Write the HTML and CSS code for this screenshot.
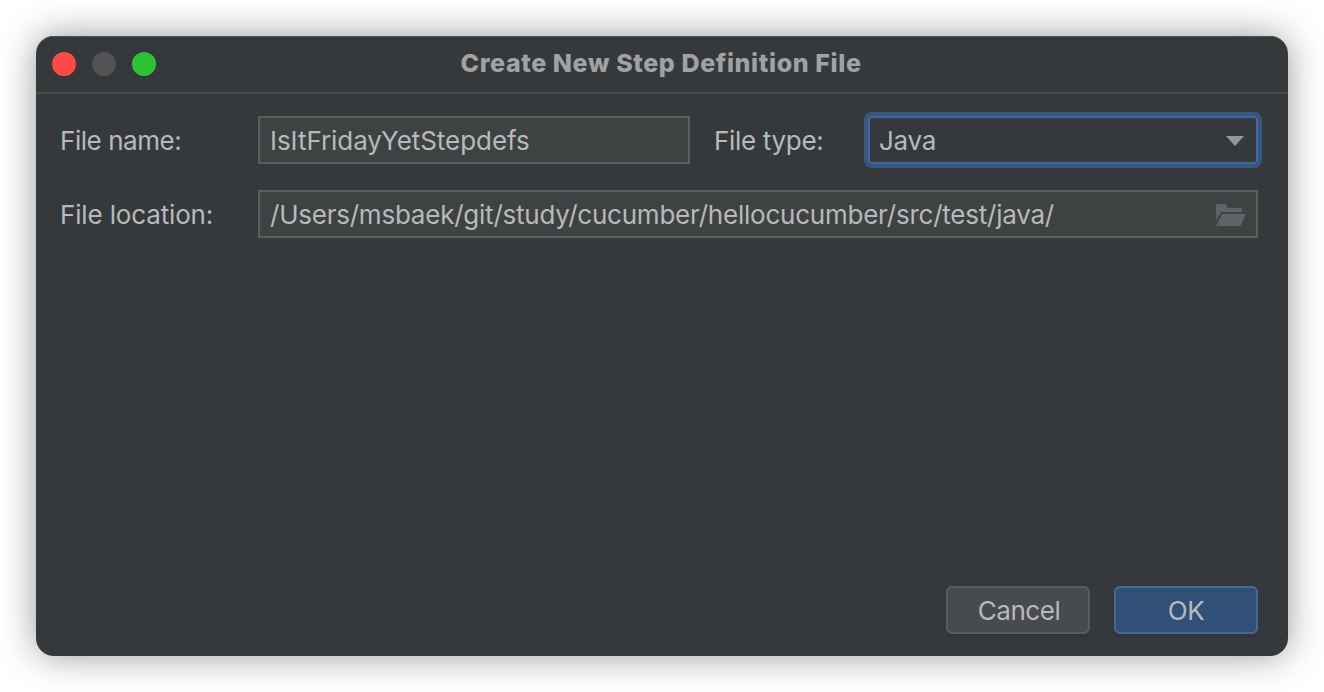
FILE: index.html
```html
<!DOCTYPE html>
<html lang="en">
<head>
<meta charset="utf-8">
<title>Create New Step Definition File</title>
<link rel="stylesheet" href="styles.css">
</head>
<body>
<main class="dialog">
  <header class="titlebar">
    <div class="lights"><span class="light close"></span><span class="light minimize"></span><span class="light maximize"></span></div>
    <h1 class="title">Create New Step Definition File</h1>
  </header>
  <section class="form">
    <div class="row">
      <span class="label tight">File name:</span>
      <div class="field name">IsItFridayYetStepdefs</div>
      <span class="label type">File type:</span>
      <div class="select">Java
        <svg class="arrow" width="18" height="10" viewBox="0 0 18 10"><path d="M0 0H18L9 10Z" fill="#94989b"/></svg>
      </div>
    </div>
    <div class="row">
      <span class="label location-label">File location:</span>
      <div class="field location">/Users/msbaek/git/study/cucumber/hellocucumber/src/test/java/
        <svg class="folder" width="30" height="22" viewBox="0 0 30 22"><path d="M0 0H10L12 4H26V8H5L0 17ZM6 10H30L24.500 22H0Z" fill="#5b6467"/></svg>
      </div>
    </div>
  </section>
  <footer class="actions">
    <button class="button tight">Cancel</button>
    <button class="button primary tight">OK</button>
  </footer>
</main>
</body>
</html>
```
FILE: styles.css
```css
* { box-sizing: border-box; }
body {
  margin: 0;
  padding: 36px;
  height: 692px;
  overflow: hidden;
  background: #fff;
  font: 26px/30px Inter, "Liberation Sans", sans-serif;
  letter-spacing: -.23px;
  color: #b8b9ba;
}
.dialog {
  display: flex;
  flex-direction: column;
  width: 1252px;
  height: 620px;
  border-radius: 18px;
  background: #35393b;
  box-shadow: inset 0 2px 0 -1px #505553, 0 0 36px rgba(0, 0, 0, .4);
}
.titlebar {
  display: grid;
  grid-template-columns: 160px 1fr 162px;
  align-items: center;
  height: 58px;
  border-bottom: 2px solid #4b4a4a;
}
.lights { display: flex; gap: 16px; padding-left: 16px; }
.light { width: 24px; height: 24px; border-radius: 50%; }
.close { background: #ff4947; }
.minimize { background: #535355; }
.maximize { background: #2bc332; }
.title {
  margin: 0;
  padding-bottom: 2px;
  text-align: center;
  font-size: 25px;
  line-height: 30px;
  font-weight: 800;
  letter-spacing: .61px;
  color: #a1a2a3;
  white-space: nowrap;
}
.form { display: flex; flex-direction: column; gap: 26px; padding: 22px 30px 0 24px; }
.row { display: flex; align-items: center; height: 48px; white-space: nowrap; }
.label { flex: none; width: 198px; padding-top: 2px; }
.type { width: 130px; margin-left: 24px; letter-spacing: -.32px; }
.location-label { letter-spacing: -.15px; }
.tight { letter-spacing: -.45px; }
.field {
  display: flex;
  flex: none;
  align-items: center;
  justify-content: space-between;
  height: 48px;
  padding: 2px 10px 0;
  border: 2px solid #5f5e5f;
  background: #3e4242;
}
.name { width: 432px; letter-spacing: -.05px; }
.location { width: 1000px; padding-right: 10px; }
.select {
  display: flex;
  flex: none;
  align-items: center;
  justify-content: space-between;
  width: 398px;
  height: 56px;
  margin-left: 20px;
  padding: 2px 14px 0 11px;
  border: 4px solid #365880;
  border-radius: 8px;
  box-shadow: inset 0 0 0 2px #43699c;
}
.actions { display: flex; justify-content: flex-end; gap: 24px; margin-top: auto; padding: 0 30px 22px; }
.button {
  width: 144px;
  height: 48px;
  padding: 2px 0 0 2px;
  border: 2px solid #5a5c5c;
  border-radius: 6px;
  background: #484b4d;
  box-shadow: 0 4px 0 #323436;
  color: #b8b9ba;
  font: inherit;
}
.primary { padding-left: 0; border-color: #446b93; background: #305078; }
```
